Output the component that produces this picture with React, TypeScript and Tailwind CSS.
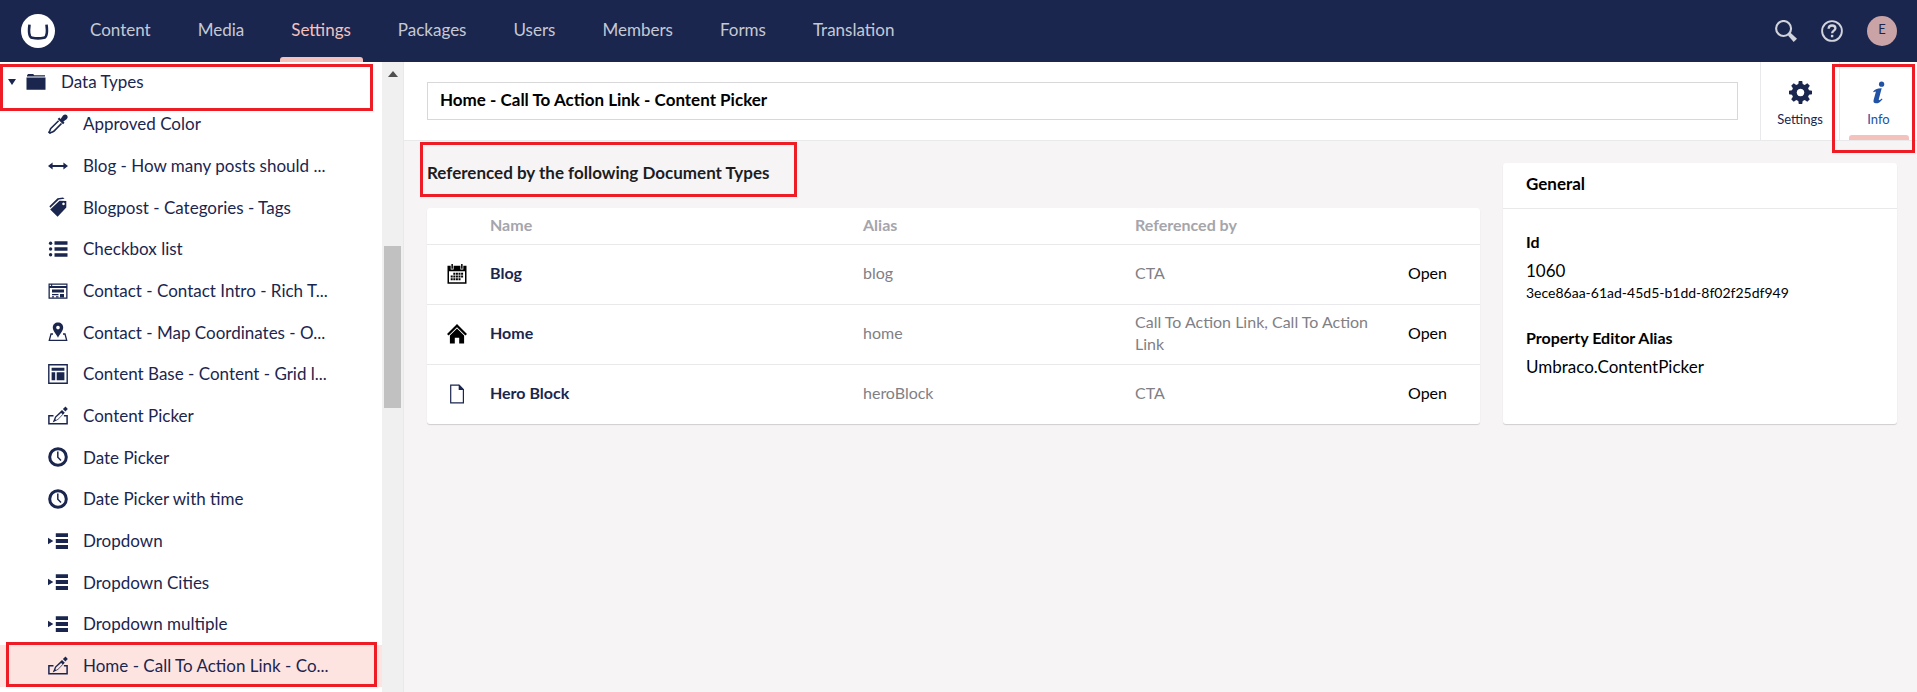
import React from "react";

type IconName =
  | "picker" | "arrows" | "tags" | "list" | "richtext" | "map" | "grid"
  | "edit" | "time" | "dropdown" | "folder" | "calendar" | "home" | "document"
  | "gear" | "info" | "search" | "help";

const shapes: Record<IconName, React.ReactNode> = {
  picker: (
    <>
      <path d="M11.2 3.6 12.6 5 15 1.600C16.200 .2 18 .2 19 1.300c1 1.100.9 2.700-.4 3.900L15.400 7.600l1.100 1.200-1.500 1.500-5.300-5.300z" />
      <path d="M10.600 6.800 3 14.300c-.8.8-.7 1.700-1.200 2.600L1 18.200l1 .9 1.400-.8c.9-.5 1.800-.4 2.600-1.200l7.500-7.600" fill="none" stroke="currentColor" strokeWidth="1.600" />
    </>
  ),
  arrows: <path d="M0 10l4.600-3.600v2.500h10.800V6.400L20 10l-4.600 3.600v-2.500H4.600v2.500z" />,
  tags: (
    <>
      <path d="M9.500 1.200 15 .5l1.600 1.200-5.700.9-8.600 8.200-.9-1.600z" />
      <path fillRule="evenodd" d="M11.500 3.800 18.300 4v6.600L9.600 19.800 2.200 12.500zM15.500 5.600a1.300 1.300 0 1 0 .01 0z" />
    </>
  ),
  list: (
    <>
      <circle cx="2.600" cy="4.200" r="1.700" /><circle cx="2.600" cy="10" r="1.700" /><circle cx="2.600" cy="15.800" r="1.700" />
      <path d="M6.500 2.300h13v3.500h-13zM6.500 8.300h13v3.500h-13zM6.500 14.200h13v3.500h-13z" />
    </>
  ),
  richtext: (
    <>
      <path fillRule="evenodd" d="M.5 2.500h19v15.300H.5zM1.700 3.700v1.400h1.400V3.700zM4.200 3.700v1.400h14.100V3.700zM1.800 6.900v9.700h16.400V6.900z" />
      <path d="M4 8.500h12v3H4zM4 13h6.500v1.200H4zM12 13h4v3.600h-4zM4 15.300h2v1.300H4zM8 15.300h2.500v1.300H8z" />
    </>
  ),
  map: (
    <>
      <path fillRule="evenodd" d="M10 .6c-3 0-5.200 2.100-5.200 4.900 0 3.400 3.400 6.200 5.200 10.300 1.800-4.100 5.200-6.900 5.200-10.300C15.200 2.700 13 .6 10 .6zM10 3.700a1.800 1.800 0 1 1-.01 0z" />
      <path d="M5 12H3l-1.700 6.300h17.400L17 12h-2" fill="none" stroke="currentColor" strokeWidth="1.300" />
    </>
  ),
  grid: (
    <>
      <path d="M.8.800h18.400v18.400H.8z" fill="none" stroke="currentColor" strokeWidth="1.400" />
      <path d="M3.600 3.800h12.800v3H3.600zM3.600 8.300h3.600v7.900H3.600zM8.700 8.300h7.700v7.900H8.700z" />
    </>
  ),
  edit: (
    <>
      <path d="M5.500 9.800H.9v8h18.200v-8h-3.200" fill="none" stroke="currentColor" strokeWidth="1.500" />
      <path fillRule="evenodd" d="M4.700 16.500 7 10.800l7-6.900 2.800 2.800-6.800 7zM8.300 11.300l-.9 2 .6.600 2-.9 4.600-4.700-1.500-1.400z" />
      <path d="M14.900 3 17.500.6l2.300 2.300-2.400 2.500z" />
    </>
  ),
  time: (
    <>
      <circle cx="10" cy="10" r="8.300" fill="none" stroke="currentColor" strokeWidth="3" />
      <path d="M9.800 4.400v5.800l3.200 3.400" fill="none" stroke="currentColor" strokeWidth="1.500" />
    </>
  ),
  dropdown: <path d="M0 6.800 5.300 10 0 13.200zM7.800 2.200H20v3.900H7.800zM7.800 8.100H20V12H7.800zM7.800 14H20v3.900H7.800z" />,
  folder: <path d="M1 3.600 2 2h5.200l1 1.300H19v1.200H1zM.5 5.400h19v12.300H.5z" />,
  calendar: (
    <>
      <path fillRule="evenodd" d="M.5 1.800h3.200v3.700h2.900V1.800h6.800v3.700h2.900V1.800h3.200v18H.5zM2 7.300v11h16v-11z" />
      <path d="M4.400 0h1.500v4.800H4.400zM14.100 0h1.500v4.800h-1.500z" />
      <path d="M6.300 8.700h2v2h-2zM8.900 8.700h2v2h-2zM11.500 8.700h2v2h-2zM14.100 8.700h2v2h-2zM3.700 11.500h2v2h-2zM6.300 11.500h2v2h-2zM8.900 11.500h2v2h-2zM11.500 11.500h2v2h-2zM14.100 11.500h2v2h-2zM3.700 14.300h2v2h-2zM6.300 14.300h2v2h-2zM8.900 14.300h2v2h-2zM11.500 14.300h2v2h-2z" />
    </>
  ),
  home: (
    <>
      <path d="M10 0 20 9.900l-1.600 1.600L10 3.200l-8.400 8.300L0 9.900z" />
      <path d="M10 4.600l7.100 7v8h-4.900v-5.800H7.800v5.800H2.900v-8z" />
    </>
  ),
  document: (
    <>
      <path d="M3.700 1.100h8.400l4.300 4.300v13.500H3.700z" fill="none" stroke="currentColor" strokeWidth="1.200" />
      <path d="M11.700.600 17 5.900h-5.300z" />
    </>
  ),
  gear: (
    <path fillRule="evenodd" d="M8.500 0h3l.4 2.600 1.800.8L15.900 1.900 18.100 4.100l-1.500 2.200.8 1.800 2.600.4v3l-2.600.4-.8 1.800 1.500 2.200-2.200 2.200-2.200-1.500-1.800.8-.4 2.600h-3l-.4-2.600-1.800-.8-2.200 1.500-2.200-2.200 1.500-2.200-.8-1.800L0 11.500v-3l2.600-.4.800-1.800L1.900 4.100l2.200-2.200 2.200 1.500 1.800-.8zM10 6.700a3.300 3.300 0 1 0 .01 0z" />
  ),
  info: (
    <>
      <circle cx="12.700" cy="2.800" r="2.300" />
      <path d="M5.300 9.300C6.700 7.400 8.800 6.300 12.800 6.400L10.300 15.700c-.4 1.500.7 1.300 2.600-.5l.6.600c-1.900 2.500-3.700 3.600-5.700 3.600-2 0-2.500-1.300-2-3.100l1.700-6c.4-1.400-.3-1.500-1.500-.5z" />
    </>
  ),
  search: (
    <>
      <circle cx="7.800" cy="7.700" r="6.800" fill="none" stroke="currentColor" strokeWidth="1.900" />
      <path d="M11.800 14l2.300-2.300 5.900 5.300-3 3z" />
    </>
  ),
  help: (
    <>
      <circle cx="10" cy="10" r="9" fill="none" stroke="currentColor" strokeWidth="1.700" />
      <path d="M6.900 7.900C7 6 8.300 5 10.100 5c1.800 0 3 1 3 2.500 0 2.200-3 2.200-3 4.600" fill="none" stroke="currentColor" strokeWidth="2.100" />
      <path d="M9 13.500h2.200v2.200H9z" />
    </>
  ),
};

function Icon({ name, className = "size-5" }: { name: IconName; className?: string }) {
  return (
    <svg viewBox="0 0 20 20" fill="currentColor" aria-hidden="true" className={`shrink-0 ${className}`}>
      {shapes[name]}
    </svg>
  );
}

function Highlight({ className }: { className: string }) {
  return <span aria-hidden="true" className={`pointer-events-none absolute z-10 border-3 border-[#ee1c25] ${className}`} />;
}

const sections = ["Content", "Media", "Settings", "Packages", "Users", "Members", "Forms", "Translation"];

const dataTypes: { icon: IconName; name: string }[] = [
  { icon: "picker", name: "Approved Color" },
  { icon: "arrows", name: "Blog - How many posts should ..." },
  { icon: "tags", name: "Blogpost - Categories - Tags" },
  { icon: "list", name: "Checkbox list" },
  { icon: "richtext", name: "Contact - Contact Intro - Rich T..." },
  { icon: "map", name: "Contact - Map Coordinates - O..." },
  { icon: "grid", name: "Content Base - Content - Grid l..." },
  { icon: "edit", name: "Content Picker" },
  { icon: "time", name: "Date Picker" },
  { icon: "time", name: "Date Picker with time" },
  { icon: "dropdown", name: "Dropdown" },
  { icon: "dropdown", name: "Dropdown Cities" },
  { icon: "dropdown", name: "Dropdown multiple" },
  { icon: "edit", name: "Home - Call To Action Link - Co..." },
];

const references: { icon: IconName; tone: string; name: string; alias: string; by: string }[] = [
  { icon: "calendar", tone: "text-black", name: "Blog", alias: "blog", by: "CTA" },
  { icon: "home", tone: "text-black", name: "Home", alias: "home", by: "Call To Action Link, Call To Action Link" },
  { icon: "document", tone: "text-[#1b264f]", name: "Hero Block", alias: "heroBlock", by: "CTA" },
];

function TopBar() {
  return (
    <header className="flex h-[62px] shrink-0 items-center bg-[#1b264f] pr-5 pl-[21px]">
      <a href="#home" aria-label="Umbraco" className="mr-3">
        <svg viewBox="0 0 34 34" className="size-[34px]" aria-hidden="true">
          <circle cx="17" cy="17" r="17" fill="#fff" />
          <path d="M8.500 10.600c-1.200 9.200-.4 12.600 2.600 13.200 3.500.7 8.300.7 11.800 0 3-.6 3.800-4 2.600-13.200" fill="none" stroke="#1b264f" strokeWidth="2.600" />
        </svg>
      </a>
      <nav className="flex h-full">
        {sections.map((s) => (
          <a
            key={s}
            href={`#${s.toLowerCase()}`}
            className={`relative flex items-center pr-6 pb-0.5 pl-[23px] ${s === "Settings" ? "text-[#f5c1bc]" : "text-[#c6c9d3]"}`}
          >
            {s}
            {s === "Settings" && <span className="absolute inset-x-3 bottom-0 h-[5px] rounded-t-[3px] bg-[#f5c1bc]" />}
          </a>
        ))}
      </nav>
      <div className="ml-auto flex items-center gap-6 text-[#d1d4dc]">
        <button type="button" aria-label="Search"><Icon name="search" className="size-[22px]" /></button>
        <button type="button" aria-label="Help"><Icon name="help" className="size-[22px]" /></button>
        <button type="button" className="size-[30px] rounded-full bg-[#c9a3a6] pb-0.5 text-[13px] text-[#1b264f]">E</button>
      </div>
    </header>
  );
}

function Sidebar() {
  return (
    <aside className="flex w-[404px] shrink-0 border-r border-[#e9e9eb] text-[#1b264f]">
      <ul className="grid flex-1 auto-rows-fr pb-[5px]">
        <li className="relative">
          <a href="#data-types" className="flex h-full items-center pb-0.5 pl-2">
            <svg viewBox="0 0 8 6" className="mr-2.5 h-1.5 w-2" aria-hidden="true"><path d="M0 0h8L4 6z" fill="currentColor" /></svg>
            <Icon name="folder" />
            <span className="ml-[15px]">Data Types</span>
          </a>
          <Highlight className="inset-x-0 top-0.5 mr-[9px] h-[47px]" />
        </li>
        {dataTypes.map((d, i) => {
          const selected = i === dataTypes.length - 1;
          return (
            <li key={d.name} className={`relative ${selected ? "bg-[#fee4e1]" : ""}`}>
              <a href={`#type-${i}`} className="flex h-full items-center gap-[15px] pb-px pl-12 whitespace-nowrap">
                <Icon name={d.icon} />
                <span>{d.name}</span>
              </a>
              {selected && <Highlight className="-top-[3px] right-[5px] left-1.5 h-[45px]" />}
            </li>
          );
        })}
      </ul>
      <div className="flex w-[21px] flex-col items-center bg-[#f0f0f0]" aria-hidden="true">
        <svg viewBox="0 0 10 6" className="mt-[9px] h-1.5 w-2.5"><path d="M5 0l5 6H0z" fill="#505050" /></svg>
        <div className="mt-[169px] h-[162px] w-[17px] bg-[#c1c1c1]" />
      </div>
    </aside>
  );
}

function EditorHeader() {
  return (
    <div className="flex h-[79px] border-b border-[#e9e9eb] bg-white">
      <div className="flex flex-1 items-start py-5 pr-[22px] pl-[23px]">
        <input
          aria-label="Name"
          defaultValue="Home - Call To Action Link - Content Picker"
          className="h-[38px] w-full border border-[#d8d7d9] bg-white px-3 pb-1 font-bold text-black outline-none"
        />
      </div>
      <button type="button" className="flex w-[79px] flex-col items-center border-l border-[#e9e9eb] pt-[19px] text-[13px] leading-5 text-[#1b264f]">
        <Icon name="gear" className="mb-[5px] size-[23px]" />
        Settings
      </button>
      <button type="button" className="relative flex w-[78px] flex-col items-center border-l border-[#e9e9eb] pt-[19px] text-[13px] leading-5 text-[#2152a3]">
        <Icon name="info" className="mb-[5px] size-[23px]" />
        Info
        <span className="absolute right-2 bottom-0 left-[9px] h-[5px] rounded-t-[3px] bg-[#f5c1bc]" />
        <Highlight className="top-0.5 right-0.5 -left-2 h-[89px]" />
      </button>
    </div>
  );
}

function ReferencesPanel() {
  return (
    <section className="min-w-0 flex-1">
      <h2 className="relative flex h-[45px] items-center pb-[25px] font-bold text-[#1d1d1f]">
        Referenced by the following Document Types
        <Highlight className="-top-[21px] -left-[7px] h-[55px] w-[377px]" />
      </h2>
      <div className="rounded-[3px] bg-white shadow-[0_1px_1px_rgba(0,0,0,0.16)]">
        <table className="w-full table-fixed border-collapse text-left text-[16px] leading-[22px]">
          <thead>
            <tr className="h-9 border-b border-[#e9e9eb] text-[#a5a5ab]">
              <th className="w-[63px]" aria-label="Icon" />
              <th className="pb-0.5">Name</th>
              <th className="w-[272px] pb-0.5">Alias</th>
              <th className="w-[273px] pb-0.5">Referenced by</th>
              <th className="w-[72px]" aria-label="Actions" />
            </tr>
          </thead>
          <tbody>
            {references.map((r) => (
              <tr key={r.name} className="h-[60px] border-b border-[#e9e9eb] text-[#817f85] last:border-b-0">
                <td className="pl-5"><Icon name={r.icon} className={`size-5 ${r.tone}`} /></td>
                <td className="pb-0.5"><a href={`#${r.alias}`} className="font-bold text-[#1b264f]">{r.name}</a></td>
                <td className="pb-0.5">{r.alias}</td>
                <td className="pr-6 pb-0.5">{r.by}</td>
                <td className="pb-0.5"><a href={`#open-${r.alias}`} className="text-black">Open</a></td>
              </tr>
            ))}
          </tbody>
        </table>
      </div>
    </section>
  );
}

function GeneralPanel() {
  return (
    <section className="h-[261px] w-[394px] shrink-0 rounded-[3px] bg-white text-black shadow-[0_1px_1px_rgba(0,0,0,0.16)]">
      <h2 className="flex h-[46px] items-center border-b border-[#e9e9eb] px-[23px] pb-1 font-bold">General</h2>
      <dl className="px-[23px] pt-[21px]">
        <dt className="text-[16px] leading-6 font-bold">Id</dt>
        <dd className="pt-[5px] leading-6">1060</dd>
        <dd className="text-[14px] leading-5">3ece86aa-61ad-45d5-b1dd-8f02f25df949</dd>
        <dt className="pt-[23px] text-[16px] leading-6 font-bold">Property Editor Alias</dt>
        <dd className="pt-[5px] leading-6">Umbraco.ContentPicker</dd>
      </dl>
    </section>
  );
}

export default function App() {
  return (
    <div className="flex h-screen flex-col overflow-hidden bg-white font-['Lato',sans-serif] text-[17px]">
      <TopBar />
      <div className="flex min-h-0 flex-1">
        <Sidebar />
        <main className="flex min-w-0 flex-1 flex-col bg-[#f6f4f5]">
          <EditorHeader />
          <div className="flex items-start gap-[23px] pt-[22px] pr-5 pl-[23px]">
            <ReferencesPanel />
            <GeneralPanel />
          </div>
        </main>
      </div>
    </div>
  );
}
